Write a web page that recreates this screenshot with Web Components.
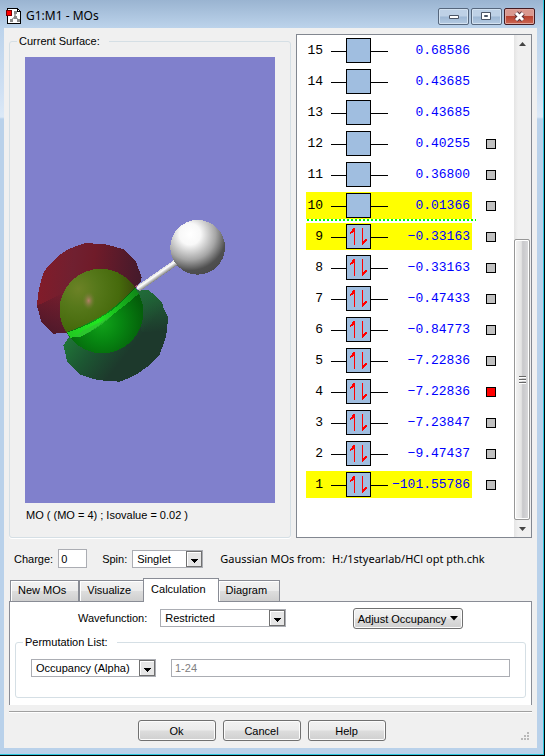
<!DOCTYPE html>
<html lang="en">
<head>
<meta charset="UTF-8">
<title>G1:M1 - MOs</title>
<style>
body {
  margin: 0;
  font: 11px/14px "Liberation Sans", Arial, sans-serif;
  color: #000;
}
</style>
</head>
<body>
<mo-window caption="G1:M1 - MOs">
  <mo-group caption="Current Surface:" slot="surface">
    <mo-surface>MO ( (MO = 4) ; Isovalue = 0.02 )</mo-surface>
  </mo-group>
  <mo-diagram slot="levels"></mo-diagram>
  <mo-summary slot="summary"></mo-summary>
  <mo-tabs slot="tabs">
    <mo-calculation></mo-calculation>
  </mo-tabs>
  <mo-button slot="actions">Ok</mo-button>
  <mo-button slot="actions">Cancel</mo-button>
  <mo-button slot="actions">Help</mo-button>
</mo-window>

<template id="window-template">
  <style>
    :host {
      display: flex;
      flex-direction: column;
      box-sizing: border-box;
      min-height: 100vh;
      padding: 0 7px 7px 4px;
      border: solid #000;
      border-width: 0 1px 1px 0;
      box-shadow: inset -1px -1px #2bc6dc;
      background: linear-gradient(#9ab4d1, #bcd3eb 28px, #cfe0f3 90px, #dce9f7 117px, #b9d1ea 119px);
    }
    header {
      display: flex;
      align-items: center;
      height: 28px;
      padding: 4px 2px 0 2px;
      box-sizing: border-box;
    }
    h1 {
      flex: 1;
      margin: 0 0 0 4px;
      font: 12px/16px "Noto Sans", "Open Sans", sans-serif;
    }
    .caption-buttons {
      display: flex;
      gap: 2px;
    }
    .caption-buttons button {
      display: grid;
      place-items: center;
      width: 31px;
      height: 17px;
      padding: 0;
      border: 1px solid #56677d;
      border-radius: 2px;
      box-shadow: inset 0 0 0 1px #d3e2f1;
      background: linear-gradient(#bed1e6 48%, #9db7d4 52%, #b5cbe2);
    }
    .caption-buttons .close {
      border-color: #431b22;
      box-shadow: inset 0 0 0 1px #dfa79f;
      background: linear-gradient(#d9988f 45%, #b8412f 50%, #cc6652);
    }
    svg { display: block; }
    main {
      flex: 1;
      display: flex;
      flex-direction: column;
      padding: 6px 5px 7px;
      background: #f0f0f0;
    }
    .top {
      flex: 1;
      display: grid;
      grid-template-columns: 1fr 236px;
      gap: 5px;
    }
    footer {
      display: flex;
      justify-content: center;
      gap: 7px;
      margin-top: 6px;
      padding-top: 8px;
      border-top: 1px solid #a0a0a0;
      box-shadow: inset 0 1px #fff;
    }
    .grip {
      align-self: flex-end;
      order: 1;
    }
    .actions {
      flex: 1;
      display: flex;
      justify-content: center;
      gap: 7px;
    }
  </style>
  <header>
    <svg width="16" height="16" viewBox="0 0 16 16" shape-rendering="crispEdges">
      <path d="M1.500.500h10l3 3v12h-13z" fill="#fff" stroke="#000"/>
      <path d="M11.500.500v3h3" fill="none" stroke="#000"/>
      <path d="M9 5v5M9 9l-4 3M9 9l4 3" stroke="#aaa" stroke-width="1.500"/>
      <path d="M8 3h3v3H8zM8 8h3v3H8zM4 11h3v3H4zM11 11h3v3h-3z" fill="#888"/>
      <path d="M.500 2.500h5v5h-5z" fill="#f00" stroke="#700"/>
    </svg>
    <h1></h1>
    <div class="caption-buttons">
      <button aria-label="Minimize">
        <svg width="12" height="10"><path d="M1.500 4.500h9v3h-9z" fill="#fff" stroke="#4b5566"/></svg>
      </button>
      <button aria-label="Maximize">
        <svg width="11" height="10"><path d="M.500 1.500h9v7h-9z" fill="#fff" stroke="#4b5566"/><path d="M3.500 4.500h3v1h-3z" fill="#9db7d4" stroke="#4b5566"/></svg>
      </button>
      <button class="close" aria-label="Close">
        <svg width="13" height="11"><path d="M3 2l7 7M10 2L3 9" stroke="#57333b" stroke-width="5"/><path d="M3 2l7 7M10 2L3 9" stroke="#fff" stroke-width="3"/></svg>
      </button>
    </div>
  </header>
  <main>
    <div class="top">
      <slot name="surface"></slot>
      <slot name="levels"></slot>
    </div>
    <slot name="summary"></slot>
    <slot name="tabs"></slot>
    <footer>
      <div class="actions"><slot name="actions"></slot></div>
      <svg class="grip" width="11" height="9" fill="#b8b8b8">
        <path d="M6 0h2v2H6zM3 3h2v2H3zM6 3h2v2H6zM0 6h2v2H0zM3 6h2v2H3zM6 6h2v2H6z"/>
      </svg>
    </footer>
  </main>
</template>

<template id="group-template">
  <style>
    :host { display: flex; }
    fieldset {
      flex: 1;
      display: flex;
      flex-direction: column;
      min-width: 0;
      margin: 0;
      padding: 0 15px;
      border: 1px solid #d5dfe5;
      border-radius: 3px;
      box-shadow: 0 1px #fff;
    }
    legend {
      margin-left: -8px;
      padding: 0 9px 0 2px;
    }
  </style>
  <fieldset>
    <legend></legend>
    <slot></slot>
  </fieldset>
</template>

<template id="surface-template">
  <style>
    :host {
      flex: 1;
      display: flex;
      flex-direction: column;
      padding: 9px 0 15px;
    }
    svg {
      flex: 1;
      display: block;
      width: 100%;
      min-height: 200px;
      background: #8080cc;
    }
    p { margin: 5px 1px 0; }
  </style>
  <svg viewBox="0 -426 750 1338" preserveAspectRatio="xMidYMid slice" shape-rendering="crispEdges">
    <defs>
      <radialGradient id="hydrogen" cx=".36" cy=".26" r=".78">
        <stop offset="0" stop-color="#fff"/>
        <stop offset=".25" stop-color="#f8f8f8"/>
        <stop offset=".6" stop-color="#a6a6a6"/>
        <stop offset=".85" stop-color="#505050"/>
        <stop offset="1" stop-color="#4a4a4a"/>
      </radialGradient>
      <linearGradient id="bond" gradientUnits="userSpaceOnUse" x1="390" y1="222" x2="402" y2="239">
        <stop offset="0" stop-color="#d8d8d8"/>
        <stop offset=".35" stop-color="#fff"/>
        <stop offset="1" stop-color="#6a6a6a"/>
      </linearGradient>
      <linearGradient id="red-lobe" gradientUnits="userSpaceOnUse" x1="50" y1="240" x2="350" y2="270">
        <stop offset="0" stop-color="#801c2a"/>
        <stop offset=".3" stop-color="#702030"/>
        <stop offset=".5" stop-color="#701b29"/>
        <stop offset="1" stop-color="#421a2b"/>
      </linearGradient>
      <linearGradient id="green-lobe" gradientUnits="userSpaceOnUse" x1="130" y1="400" x2="270" y2="510">
        <stop offset="0" stop-color="#207838"/>
        <stop offset=".5" stop-color="#1c5632"/>
        <stop offset="1" stop-color="#1d392c"/>
      </linearGradient>
      <linearGradient id="red-shade" gradientUnits="userSpaceOnUse" x1="150" y1="300" x2="90" y2="400">
        <stop offset="0" stop-color="#48182a" stop-opacity="0"/>
        <stop offset="1" stop-color="#48182a" stop-opacity=".8"/>
      </linearGradient>
      <linearGradient id="green-light" gradientUnits="userSpaceOnUse" x1="370" y1="275" x2="390" y2="400">
        <stop offset="0" stop-color="#22703a" stop-opacity=".8"/>
        <stop offset="1" stop-color="#22703a" stop-opacity="0"/>
      </linearGradient>
      <radialGradient id="olive" gradientUnits="userSpaceOnUse" cx="160" cy="270" r="190">
        <stop offset="0" stop-color="#6c8226"/>
        <stop offset=".3" stop-color="#56781a"/>
        <stop offset=".65" stop-color="#466a0c"/>
        <stop offset="1" stop-color="#363f0b"/>
      </radialGradient>
      <radialGradient id="chlorine" gradientUnits="userSpaceOnUse" cx="230" cy="370" r="130">
        <stop offset="0" stop-color="#11a41a"/>
        <stop offset=".45" stop-color="#078611"/>
        <stop offset="1" stop-color="#045d0a"/>
      </radialGradient>
      <linearGradient id="seam" gradientUnits="userSpaceOnUse" x1="130" y1="405" x2="335" y2="275">
        <stop offset="0" stop-color="#22c822"/>
        <stop offset=".4" stop-color="#20e820"/>
        <stop offset="1" stop-color="#108818"/>
      </linearGradient>
      <radialGradient id="glint">
        <stop offset="0" stop-color="#b28068"/>
        <stop offset="1" stop-color="#6b7a30" stop-opacity="0"/>
      </radialGradient>
    </defs>
    <path fill="url(#red-lobe)" d="M36 320L39 285L45 258L51 235L58 216L73 198L90 180L108 165L128 152L154 141L180 132L240 136L268 143L296 151L316 170L334 190L341 211L350 234L347 247L330 270L240 345L128 401L85 404L66 386L49 368L42 342Z"/>
    <path fill="url(#red-shade)" d="M36 320L49 368L66 386L85 404L128 401L180 370L120 280Z"/>
    <path fill="url(#green-lobe)" d="M128 402L240 345L330 270L345 274L371 273L392 292L412 313L416 330L429 353L426 395L420 423L403 468L375 498L336 525L310 538L284 548L248 546L214 542L187 534L162 525L144 507L127 490L120 459L115 440L132 414Z"/>
    <path fill="url(#green-light)" d="M330 270L345 274L371 273L392 292L412 313L416 330L429 353L426 395L350 400Z"/>
    <circle cx="232" cy="340" r="123" fill="url(#chlorine)"/>
    <path fill="url(#olive)" d="M124 400A123 123 0 0 1 330 265Q300 300 240 345Q185 378 124 400Z"/>
    <path fill="url(#seam)" d="M126 401Q190 380 240 348Q285 320 331 267L341 284Q310 312 270 342Q205 395 166 413L136 416Z"/>
    <path fill="#32ba35" opacity=".6" d="M180 391Q230 370 270 342Q235 377 198 397Q170 414 145 416Z"/>
    <ellipse cx="191" cy="305" rx="20" ry="28" fill="url(#glint)"/>
    <path stroke="url(#bond)" stroke-width="18" d="M338 270L456 188"/>
    <path fill="#9a5868" d="M328 263L340 256L336 266Z"/>
    <circle cx="518" cy="145" r="82" fill="url(#hydrogen)"/>
  </svg>
  <p><slot></slot></p>
</template>

<template id="diagram-template">
  <style>
    :host {
      display: flex;
      justify-content: space-between;
      box-sizing: border-box;
      border: 1px solid #828790;
      background: #fff;
    }
    .levels {
      display: grid;
      grid-auto-rows: 27px;
      align-content: start;
      gap: 4px;
      padding: 2px 0 0 9px;
    }
    .scrollbar {
      display: flex;
      flex-direction: column;
      width: 17px;
      background: linear-gradient(90deg, #e4e4e4, #f0f0f0 4px);
    }
    .scrollbar svg { display: block; flex: none; }
    .track {
      flex: 1;
      display: flex;
      align-items: flex-end;
    }
    .thumb {
      display: grid;
      place-items: center;
      box-sizing: border-box;
      width: 16px;
      height: 60%;
      border: 1px solid #979797;
      border-radius: 2px;
      box-shadow: inset 0 0 0 1px #fff;
      background: linear-gradient(90deg, #f4f4f4, #e4e4e4 45%, #c8c8cb 55%, #dadadc);
    }
  </style>
  <div class="levels"></div>
  <div class="scrollbar">
    <svg width="17" height="17"><path d="M5 11l3.500-4 3.500 4z" fill="#444"/></svg>
    <div class="track">
      <div class="thumb">
        <svg width="7" height="10"><path d="M0 1.500h7M0 4.500h7M0 7.500h7" stroke="#666"/><path d="M0 2.500h7M0 5.500h7M0 8.500h7" stroke="#fff"/></svg>
      </div>
    </div>
    <svg width="17" height="17"><path d="M5 7l3.500 4 3.500-4z" fill="#444"/></svg>
  </div>
</template>

<template id="level-template">
  <style>
    :host {
      display: grid;
      grid-template-columns: 166px 10px;
      align-items: center;
      gap: 14px;
      position: relative;
      font: 13px/27px "Liberation Mono", monospace;
    }
    .level {
      display: grid;
      grid-template-columns: 17px 57px minmax(0, 1fr);
      column-gap: 8px;
      padding-right: 2px;
      height: 27px;
    }
    :host([marked]) .level { background: #ff0; }
    :host([lumo])::after {
      content: "";
      position: absolute;
      left: 1px;
      top: 27px;
      width: 169px;
      height: 2px;
      background: repeating-linear-gradient(90deg, #0f0 0 2px, transparent 2px 4px);
    }
    .number, .energy {
      text-align: right;
      white-space: nowrap;
    }
    .energy {
      display: flex;
      justify-content: flex-end;
      color: #00f;
    }
    svg { display: block; margin-top: 1px; }
    .electrons { display: none; }
    :host([occupied]) .electrons { display: inline; }
    input {
      appearance: none;
      width: 10px;
      height: 10px;
      margin: 0;
      border: 1px solid #000;
      background: #c0c0c0;
    }
    input:checked { background: #f00; }
    :host([plain]) input { display: none; }
  </style>
  <div class="level">
    <span class="number"></span>
    <svg width="57" height="25" viewBox="0 0 57 25" shape-rendering="crispEdges">
      <path d="M0 13.500h57" stroke="#000"/>
      <path d="M15.500.500h24v24h-24z" fill="#a0bee0" stroke="#000"/>
      <g class="electrons" fill="#f00">
        <path d="M23 4h1v17h-1zM22 4h1v4h-1zM21 5h1v4h-1zM20 7h1v2h-1zM19 8h1v2h-1z"/>
        <path d="M31 4h1v17h-1zM32 17h1v3h-1zM33 16h1v3h-1zM34 15h1v3h-1zM35 15h1v2h-1z"/>
      </g>
    </svg>
    <span class="energy"></span>
  </div>
  <input type="checkbox">
</template>

<template id="select-template">
  <style>
    :host { display: flex; align-items: center; }
    label { margin-right: var(--label-gap, 0); }
    .box {
      flex: 1;
      display: grid;
      grid-template-columns: 1fr 16px;
      align-items: center;
      box-sizing: border-box;
      height: 18px;
      width: var(--select-width, auto);
      border: 1px solid #abadb3;
      background: #fff;
    }
    select {
      grid-area: 1 / 1 / 2 / 3;
      appearance: none;
      width: 100%;
      height: 16px;
      padding: 0 16px 0 4px;
      border: 0;
      background: none;
      font: inherit;
      color: inherit;
    }
    svg {
      grid-area: 1 / 2;
      display: block;
      pointer-events: none;
    }
  </style>
  <label for="choice"></label>
  <span class="box">
    <select id="choice"></select>
    <svg width="16" height="16" shape-rendering="crispEdges">
      <path d="M.500.500h15v15H.500z" fill="#e6e6e6" stroke="#707070"/>
      <path d="M1.500 14.500v-13h13" fill="none" stroke="#fff"/>
      <path d="M5 8h7v1H5zM6 9h5v1H6zM7 10h3v1H7zM8 11h1v1H8z"/>
    </svg>
  </span>
</template>

<template id="button-template">
  <style>
    :host { display: block; }
    button {
      display: flex;
      align-items: center;
      justify-content: center;
      gap: 4px;
      width: var(--button-width, 78px);
      height: 21px;
      padding: 0;
      border: 1px solid #707070;
      border-radius: 3px;
      box-shadow: inset 0 0 0 1px #fcfcfc;
      background: linear-gradient(#f2f2f2, #ebebeb 48%, #dddddd 52%, #cfcfcf);
      font: inherit;
      color: inherit;
      white-space: nowrap;
    }
    svg { display: none; }
    :host([menu]) svg { display: block; }
  </style>
  <button type="button">
    <slot></slot>
    <svg width="8" height="5"><path d="M0 0h8L4 4.500z"/></svg>
  </button>
</template>

<template id="summary-template">
  <style>
    :host {
      display: flex;
      align-items: center;
      height: 19px;
      margin: 11px 0 10px;
      padding-left: 5px;
      white-space: nowrap;
    }
    input {
      box-sizing: border-box;
      width: 29px;
      height: 19px;
      margin: 0 15px 0 5px;
      padding: 0 2px;
      border: 1px solid #abadb3;
      background: #fff;
      font: inherit;
    }
    mo-select {
      --label-gap: 5px;
      --select-width: 71px;
      margin-right: 17px;
    }
    p {
      display: flex;
      gap: 7px;
      margin: 0;
      font: 11px/14px "Noto Sans", "Open Sans", sans-serif;
    }
  </style>
  <label for="charge">Charge:</label>
  <input id="charge" value="0">
  <mo-select label="Spin:" options="Singlet|Triplet"></mo-select>
  <p><span>Gaussian MOs from:</span><span>H:/1styearlab/HCl opt pth.chk</span></p>
</template>

<template id="tabs-template">
  <style>
    :host { display: block; }
    nav {
      display: flex;
      align-items: flex-end;
      height: 23px;
      padding-left: 1px;
    }
    button {
      height: 21px;
      padding: 0 12px 2px 7px;
      border: 1px solid #898c95;
      border-bottom: 0;
      background: linear-gradient(#f2f2f2, #ebebeb 48%, #dddddd 52%, #cfcfcf);
      box-shadow: inset 1px 1px #fff;
      font: inherit;
      color: inherit;
    }
    button[aria-selected="true"] {
      height: 24px;
      margin: 0 -1px;
      padding-bottom: 4px;
      background: #fff;
      position: relative;
      bottom: -1px;
    }
    .panel {
      border: 1px solid #898c95;
      border-bottom: 0;
      background: #fff;
    }
  </style>
  <nav role="tablist">
    <button role="tab">New MOs</button>
    <button role="tab">Visualize</button>
    <button role="tab" aria-selected="true">Calculation</button>
    <button role="tab">Diagram</button>
  </nav>
  <div class="panel" role="tabpanel"><slot></slot></div>
</template>

<template id="calculation-template">
  <style>
    :host { display: block; padding: 6px 5px 7px; }
    .row { display: flex; align-items: center; }
    .wavefunction {
      align-items: flex-start;
      justify-content: space-between;
      padding: 0 63px 6px;
    }
    .wavefunction mo-select {
      --label-gap: 13px;
      --select-width: 126px;
      margin-top: 1px;
    }
    mo-button { --button-width: 110px; }
    .permutation {
      gap: 15px;
      padding: 10px 0 20px;
    }
    .permutation mo-select { --select-width: 125px; }
    input {
      flex: 1;
      min-width: 0;
      box-sizing: border-box;
      height: 18px;
      padding: 0 3px;
      border: 1px solid #abadb3;
      background: #fff;
      font: inherit;
      color: #808080;
    }
  </style>
  <div class="row wavefunction">
    <mo-select label="Wavefunction:" options="Restricted|Unrestricted"></mo-select>
    <mo-button menu>Adjust Occupancy</mo-button>
  </div>
  <mo-group caption="Permutation List:">
    <div class="row permutation">
      <mo-select name="Occupancy" options="Occupancy (Alpha)|Occupancy (Beta)"></mo-select>
      <input aria-label="Permutation list" value="1-24" readonly>
    </div>
  </mo-group>
</template>

<script>
class MoElement extends HTMLElement {
  constructor() {
    super();
    const template = document.getElementById(this.constructor.templateId);
    this.attachShadow({ mode: "open" }).appendChild(template.content.cloneNode(true));
  }

  find(selector) {
    return this.shadowRoot.querySelector(selector);
  }
}

class MoWindow extends MoElement {
  static templateId = "window-template";
  connectedCallback() {
    this.find("h1").textContent = this.getAttribute("caption");
  }
}

class MoGroup extends MoElement {
  static templateId = "group-template";
  connectedCallback() {
    this.find("legend").textContent = this.getAttribute("caption");
  }
}

class MoSurface extends MoElement {
  static templateId = "surface-template";
}

class MoLevel extends MoElement {
  static templateId = "level-template";
  connectedCallback() {
    const number = this.getAttribute("number");
    this.find(".number").textContent = number;
    this.find(".energy").textContent = this.getAttribute("energy");
    this.find("input").checked = this.hasAttribute("selected");
    this.find("input").setAttribute("aria-label", "Show orbital " + number);
  }
}

const ENERGIES = [
  "0.68586", "0.43685", "0.43685", "0.40255", "0.36800", "0.01366",
  "-0.33163", "-0.33163", "-0.47433", "-0.84773", "-7.22836",
  "-7.22836", "-7.23847", "-9.47437", "-101.55786",
];
const MARKED = [10, 9, 1];

class MoDiagram extends MoElement {
  static templateId = "diagram-template";
  connectedCallback() {
    const levels = this.find(".levels");
    ENERGIES.forEach((energy, i) => {
      const number = ENERGIES.length - i;
      const level = document.createElement("mo-level");
      level.setAttribute("number", number);
      level.setAttribute("energy", energy.replace("-", "−"));
      level.toggleAttribute("occupied", number <= 9);
      level.toggleAttribute("marked", MARKED.includes(number));
      level.toggleAttribute("lumo", number === 10);
      level.toggleAttribute("plain", number > 12);
      level.toggleAttribute("selected", number === 4);
      levels.appendChild(level);
    });
  }
}

class MoSelect extends MoElement {
  static templateId = "select-template";
  connectedCallback() {
    const label = this.find("label");
    const select = this.find("select");
    label.textContent = this.getAttribute("label") || "";
    label.hidden = !label.textContent;
    if (label.hidden) select.setAttribute("aria-label", this.getAttribute("name"));
    select.replaceChildren(...this.getAttribute("options").split("|").map((text) => new Option(text)));
  }
}

class MoButton extends MoElement {
  static templateId = "button-template";
}

class MoSummary extends MoElement {
  static templateId = "summary-template";
}

class MoTabs extends MoElement {
  static templateId = "tabs-template";
}

class MoCalculation extends MoElement {
  static templateId = "calculation-template";
}

customElements.define("mo-level", MoLevel);
customElements.define("mo-select", MoSelect);
customElements.define("mo-button", MoButton);
customElements.define("mo-group", MoGroup);
customElements.define("mo-surface", MoSurface);
customElements.define("mo-diagram", MoDiagram);
customElements.define("mo-summary", MoSummary);
customElements.define("mo-calculation", MoCalculation);
customElements.define("mo-tabs", MoTabs);
customElements.define("mo-window", MoWindow);
</script>
</body>
</html>
